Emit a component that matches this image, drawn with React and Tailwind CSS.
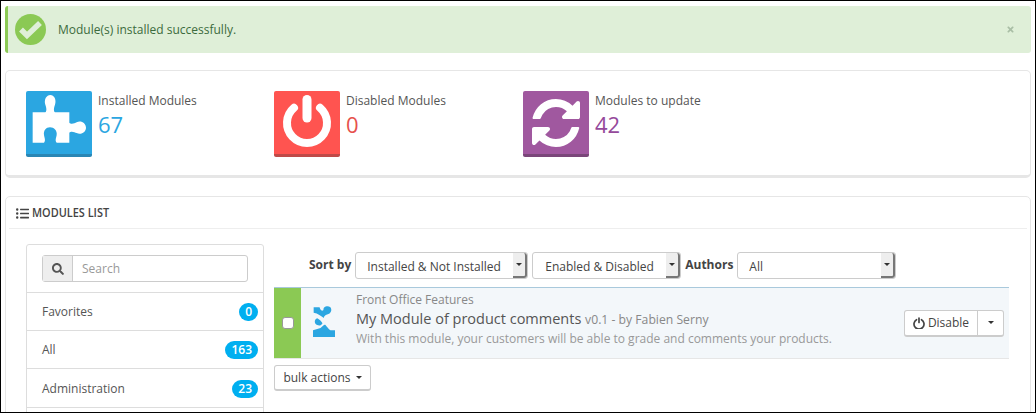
import { FaSearch, FaListUl, FaTimes } from "react-icons/fa";

function PowerIcon({ className, strokeWidth = 8 }) {
    return (
        <svg viewBox="0 0 66 63" className={className} fill="none" stroke="currentColor" strokeLinecap="round" strokeWidth={strokeWidth}>
            <path d="M20 16.8A20 20 0 1 0 46 16.8" />
            <path d="M33 8.5V27" strokeWidth={strokeWidth + 1} />
        </svg>
    );
}

function SmallPower() {
    return (
        <svg viewBox="0 0 24 24" className="w-[12px] h-[12px] mr-[3px]" fill="none" stroke="currentColor" strokeLinecap="round" strokeWidth="3.4">
            <path d="M7 5.5a10 10 0 1 0 10 0" />
            <path d="M12 2v9" />
        </svg>
    );
}

function Caret({ className = "" }) {
    return <span className={`inline-block w-0 h-0 border-x-[3px] border-x-transparent border-t-[3px] border-t-[#333] ${className}`} />;
}

function Stat({ color, dark, textColor, label, value, width, children }) {
    return (
        <div className={`flex ${width}`}>
            <div className={`w-[66px] h-[66px] rounded-[2px] flex items-center justify-center text-white border-b-[3px] ${color} ${dark}`}>
                {children}
            </div>
            <div className="ml-[6px] pt-[1px]">
                <div className="text-[12px] leading-[18px] text-[#555]">{label}</div>
                <div className={`text-[22px] leading-[28px] ${textColor}`}>{value}</div>
            </div>
        </div>
    );
}

function SelectBox({ width, label, pad = "pl-[11px]" }) {
    return (
        <div className={`relative h-[27px] bg-white border border-[#ccc] rounded-[3px] flex items-center pt-[3px] text-[12px] text-[#444] ${pad} ${width}`}>
            {label}
            <div className="absolute right-0 top-0 bottom-0 w-[14px] bg-[#eee] border-r-2 border-b-2 border-[#777] rounded-r-[3px] flex items-center justify-center">
                <Caret />
            </div>
        </div>
    );
}

function CatRow({ label, count, height = "h-[38px]" }) {
    return (
        <div className={`border-t border-[#ddd] flex items-center justify-between pl-[15px] pr-[5px] ${height}`}>
            <span className="text-[12px] text-[#555]">{label}</span>
            <span className="mt-[1px] min-w-[18px] h-[18px] px-[6px] rounded-full bg-[#00aff0] text-white text-[12px] font-semibold flex items-center justify-center">{count}</span>
        </div>
    );
}

export default function App() {
    return (
        <div className="h-[413px] overflow-hidden bg-white border border-black px-[4px] pt-[5px] font-['Open_Sans',sans-serif]">
            {/* alert */}
            <div className="h-[47px] bg-[#dfefd8] border-l-[3px] border-[#8bc954] rounded-[3px] flex items-center pl-[7px] pr-[16px] text-[12px] text-[#3c6b3d]">
                <svg viewBox="0 0 31 31" className="w-[31px] h-[31px]">
                    <circle cx="15.5" cy="15.5" r="15.5" fill="#8bc954" />
                    <path d="M6 15.5L12 21.5L25 9" fill="none" stroke="#dfefd8" strokeWidth="5.5" />
                </svg>
                <span className="ml-[12px]">Module(s) installed successfully.</span>
                <FaTimes className="ml-auto w-[9px] h-[9px] text-[#a9bea5]" />
            </div>

            {/* stats */}
            <div className="mt-[17px] h-[108px] border border-[#e6e6e6] border-b-[3px] rounded-[5px] flex pl-[20px] pt-[20px]">
                <Stat width="w-[248px]" color="bg-[#2ba6e1]" dark="border-[#2a86b4]" textColor="text-[#2ba6e1]" label="Installed Modules" value="67">
                    <svg viewBox="0 3 198 189" className="w-[66px] h-[63px]" fill="currentColor">
                        <path d="M20 67L58 67C64 62 60 50 58 44C53 28 62 15 73 15C84 15 92 28 87 44C85 50 81 62 87 67L130 67L130 98C135 104 146 100 152 97C165 90 180 100 180 113C180 126 165 136 152 129C146 126 135 122 130 128L130 158L92 158C86 152 91 142 92 135C94 122 84 112 72 112C60 112 52 122 54 135C55 142 60 152 54 158L20 158Z" />
                    </svg>
                </Stat>
                <Stat width="w-[249px]" color="bg-[#ff5450]" dark="border-[#bf4a48]" textColor="text-[#e6514d]" label="Disabled Modules" value="0">
                    <PowerIcon className="w-[66px] h-[63px]" />
                </Stat>
                <Stat width="w-[200px]" color="bg-[#a0589f]" dark="border-[#7a4679]" textColor="text-[#95499b]" label="Modules to update" value="42">
                    <svg viewBox="0 0 1536 1536" className="w-[48px] h-[48px]" fill="currentColor">
                        <path d="M1511 928q0 5-1 7-64 268-268 434.5t-478 166.5q-146 0-282.5-55t-243.5-157l-129 129q-19 19-45 19t-45-19-19-45v-448q0-26 19-45t45-19h448q26 0 45 19t19 45-19 45l-137 137q71 66 161 102t187 36q134 0 250-65t186-179q11-17 53-117 8-23 30-23h192q13 0 22.5 9.5t9.5 22.5zm25-800v448q0 26-19 45t-45 19h-448q-26 0-45-19t-19-45 19-45l138-138q-148-137-349-137-134 0-250 65t-186 179q-11 17-53 117-8 23-30 23h-199q-13 0-22.5-9.5t-9.5-22.5v-7q65-268 270-434.5t480-166.5q146 0 284 55.5t245 156.5l130-129q19-19 45-19t45 19 19 45z" />
                    </svg>
                </Stat>
            </div>

            {/* modules list */}
            <div className="mt-[18px] h-[240px] border border-[#e6e6e6] rounded-[5px] px-[3px]">
                <div className="h-[32px] border-b border-[#eee] flex items-center pl-[7px] pt-[1px] text-[#444]">
                    <FaListUl className="w-[13px] h-[13px]" />
                    <span className="inline-block ml-[3px] origin-left scale-x-[0.84] text-[13px] font-semibold">MODULES LIST</span>
                </div>
                <div className="flex pl-[17px] pt-[15px]">
                    <div className="w-[238px] h-[200px] border border-[#ddd] rounded-[3px]">
                        <div className="h-[47px] flex items-center px-[15px]">
                            <div className="w-[206px] h-[27px] border border-[#ccc] rounded-[3px] flex">
                                <div className="w-[30px] bg-[#eee] border-r border-[#ccc] flex items-center justify-center text-[#555]">
                                    <FaSearch className="w-[12px] h-[12px]" />
                                </div>
                                <span className="pl-[9px] text-[12px] leading-[25px] text-[#999]">Search</span>
                            </div>
                        </div>
                        <CatRow label="Favorites" count="0" />
                        <CatRow label="All" count="163" />
                        <CatRow label="Administration" count="23" height="h-[39px] pt-[1px]" />
                        <div className="border-t border-[#ddd]" />
                    </div>
                    <div className="ml-[10px] w-[735px]">
                        <div className="flex items-center h-[28px] mt-[7px] text-[12px]">
                            <span className="ml-[35px] mr-[4px] font-bold text-[#444]">Sort by</span>
                            <SelectBox width="w-[173px]" label="Installed & Not Installed" />
                            <span className="w-[4px]" />
                            <SelectBox width="w-[149px]" label="Enabled & Disabled" pad="pl-[12px]" />
                            <span className="ml-[4px] mr-[4px] font-bold text-[#444]">Authors</span>
                            <SelectBox width="w-[159px]" label="All" />
                        </div>
                        <div className="mt-[8px] h-[72px] bg-[#f3f7fa] border-t border-t-[#a9c9dc] border-b border-b-[#e6e6e6] flex">
                            <div className="w-[27px] bg-[#8bc954] flex items-center justify-center">
                                <span className="w-[12px] h-[12px] bg-white border border-[#999] rounded-[3px]" />
                            </div>
                            <div className="w-[55px] pl-[12px] pt-[17px]">
                                <svg viewBox="25 15 67 97" className="w-[22px] h-[32px] text-[#2ba6e1]" fill="currentColor">
                                    <path d="M27 22L45 22C48 32 52 34 57 30C55 20 70 15 78 22C84 30 80 42 68 44C62 46 58 50 58 54C50 48 40 40 27 38Z" />
                                    <path d="M38 55C28 58 28 72 38 76C46 79 50 76 54 70C50 64 44 58 38 55Z" />
                                    <path d="M25 92L48 85C56 78 60 72 63 76C68 82 72 88 78 92L92 92L92 112L25 112Z" />
                                </svg>
                            </div>
                            <div className="flex-1 pt-[3px]">
                                <div className="text-[12px] leading-[18px] text-[#888]">Front Office Features</div>
                                <div className="text-[14.5px] leading-[20px] text-[#555] whitespace-nowrap">My Module of product comments <span className="text-[12.2px] text-[#888]">v0.1 - by Fabien Serny</span></div>
                                <div className="text-[12px] leading-[18px] text-[#999]">With this module, your customers will be able to grade and comments your products.</div>
                            </div>
                            <div className="self-center mr-[5px] h-[27px] flex bg-white border border-[#ccc] border-b-2 rounded-[3px] text-[12px] text-[#444]">
                                <div className="w-[73px] flex items-center justify-center border-r border-[#ccc]">
                                    <SmallPower />
                                    Disable
                                </div>
                                <div className="w-[25px] flex items-center justify-center"><Caret /></div>
                            </div>
                        </div>
                        <div className="mt-[6px] w-[97px] h-[26px] bg-white border border-[#ccc] border-b-2 rounded-[3px] flex items-center justify-center text-[12px] text-[#444]">
                            bulk actions<Caret className="ml-[5px]" />
                        </div>
                    </div>
                </div>
            </div>
        </div>
    );
}
